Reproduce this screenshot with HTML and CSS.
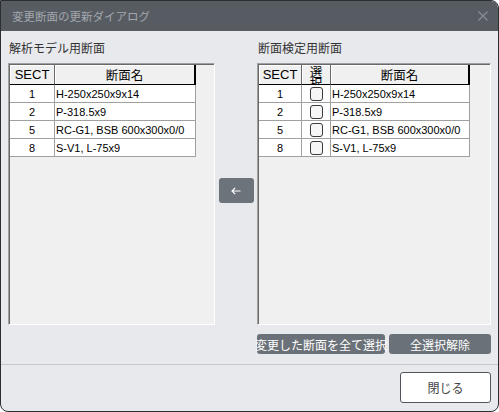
FILE: index.html
```html
<!DOCTYPE html>
<html lang="ja">
<head>
    <meta charset="utf-8">
    <title>変更断面の更新ダイアログ</title>
    <link rel="stylesheet" href="styles.css">
</head>
<body>
    <div class="dialog">
        <div class="titlebar">
            <span class="title">変更断面の更新ダイアログ</span>
            <button class="title-close" aria-label="閉じる">
                <svg width="10" height="10" viewBox="0 0 10 10"><path d="M0.5 0.5L9.5 9.5M9.5 0.5L0.5 9.5" stroke="#8b9096" stroke-width="1.1" fill="none"/></svg>
            </button>
        </div>

        <div class="content">
            <div class="label">解析モデル用断面</div>
            <div></div>
            <div class="label">断面検定用断面</div>

            <!-- 左: 解析モデル側の断面一覧 -->
            <div class="panel">
                <div class="grid grid-left">
                    <div class="row head">
                        <div class="cell sect">SECT</div>
                        <div class="cell name-head">断面名</div>
                    </div>
                    <div class="row">
                        <div class="cell sect">1</div>
                        <div class="cell name">H-250x250x9x14</div>
                    </div>
                    <div class="row">
                        <div class="cell sect">2</div>
                        <div class="cell name">P-318.5x9</div>
                    </div>
                    <div class="row">
                        <div class="cell sect">5</div>
                        <div class="cell name">RC-G1, BSB 600x300x0/0</div>
                    </div>
                    <div class="row">
                        <div class="cell sect">8</div>
                        <div class="cell name">S-V1, L-75x9</div>
                    </div>
                </div>
            </div>

            <div class="middle">
                <button class="arrow-btn" aria-label="反映">
                    <svg width="10" height="8" viewBox="0 0 10 8"><path d="M9.5 4H1M4.2 0.8L1 4L4.2 7.2" stroke="#fff" stroke-width="1.2" fill="none"/></svg>
                </button>
            </div>

            <!-- 右: 検定側の断面一覧（選択チェック付き） -->
            <div class="panel">
                <div class="grid grid-right">
                    <div class="row head">
                        <div class="cell sect">SECT</div>
                        <div class="cell sel-head">選択</div>
                        <div class="cell name-head">断面名</div>
                    </div>
                    <div class="row">
                        <div class="cell sect">1</div>
                        <div class="cell check"><span class="box"></span></div>
                        <div class="cell name">H-250x250x9x14</div>
                    </div>
                    <div class="row">
                        <div class="cell sect">2</div>
                        <div class="cell check"><span class="box"></span></div>
                        <div class="cell name">P-318.5x9</div>
                    </div>
                    <div class="row">
                        <div class="cell sect">5</div>
                        <div class="cell check"><span class="box"></span></div>
                        <div class="cell name">RC-G1, BSB 600x300x0/0</div>
                    </div>
                    <div class="row">
                        <div class="cell sect">8</div>
                        <div class="cell check"><span class="box"></span></div>
                        <div class="cell name">S-V1, L-75x9</div>
                    </div>
                </div>
            </div>

            <div></div>
            <div></div>
            <div class="actions">
                <button class="btn btn-select">変更した断面を全て選択</button>
                <button class="btn btn-clear">全選択解除</button>
            </div>
        </div>

        <div class="footer">
            <button class="close-btn">閉じる</button>
        </div>
    </div>
</body>
</html>
```

FILE: styles.css
```css
* {
    box-sizing: border-box;
}

body {
    margin: 0;
    background: #fff;
    font-family: "Noto Sans CJK JP", "Noto Sans", sans-serif;
}

button {
    font-family: inherit;
    cursor: pointer;
}

.dialog {
    width: 499px;
    height: 412px;
    border: 1px solid #2b2f34;
    border-radius: 0 8px 8px 8px;
    background: #e8e9ed;
    display: flex;
    flex-direction: column;
    overflow: hidden;
}

.titlebar {
    height: 30px;
    flex: none;
    background: #575c63;
    display: flex;
    align-items: center;
    justify-content: space-between;
    padding: 0 10px 0 11px;
}

.title {
    color: #a3a7ad;
    font-size: 11.5px;
}

.title-close {
    border: none;
    background: none;
    padding: 0;
    width: 10px;
    height: 10px;
    display: flex;
}

.content {
    flex: 1;
    display: grid;
    grid-template-columns: 207px 42px 234px;
    grid-template-rows: 16px 262px 20px;
    padding: 9px 7px 0 7px;
}

.label {
    font-size: 12px;
    line-height: 16px;
    color: #333;
    padding-left: 1px;
}

.panel {
    margin-top: 7px;
    height: 262px;
    background: #f0f0f0;
    border: 1px solid;
    border-color: #a0a0a0 #fff #fff #a0a0a0;
    box-shadow: inset 1px 1px #696969;
    padding: 1px 0 0 1px;
}

.middle {
    margin-top: 7px;
    display: flex;
    align-items: center;
    justify-content: center;
}

.arrow-btn {
    width: 35px;
    height: 25px;
    border: none;
    border-radius: 3px;
    background: #6c737b;
    display: flex;
    align-items: center;
    justify-content: center;
    padding: 0;
}

/* 一覧グリッド */
.grid {
    font-family: "Liberation Sans", Arial, sans-serif;
    font-size: 11px;
    color: #000;
}

.row {
    display: grid;
    height: 18px;
}

.grid-left .row {
    grid-template-columns: 45px 141px;
}

.grid-right .row {
    grid-template-columns: 43px 29px 139px;
}

.cell {
    background: #fff;
    border-right: 1px solid #a0a0a0;
    border-bottom: 1px solid #a0a0a0;
    display: flex;
    align-items: center;
    white-space: nowrap;
    overflow: hidden;
}

.cell.sect {
    justify-content: center;
}

.cell.name {
    padding-left: 1px;
}

.cell.check {
    justify-content: center;
}

.box {
    width: 13px;
    height: 14px;
    border: 1px solid #3a3a3a;
    border-radius: 3px;
    background: #f6f6f6;
}

.row.head {
    height: 20px;
}

.head .cell {
    background: #f0f0f0;
    border-right: 1px solid #6a6a6a;
    border-bottom: 1px solid #000;
    box-shadow: inset 1px 1px #fff;
    font-size: 13px;
    justify-content: center;
}

.head .cell:last-child {
    border-right: 2px solid #000;
}

.head .name-head,
.head .sel-head {
    font-family: "Noto Sans CJK JP", sans-serif;
    font-size: 12.5px;
}

/* 列幅が狭いので見出しは折り返して下側が隠れる */
.head .sel-head {
    white-space: normal;
    display: block;
    text-align: center;
    line-height: 11px;
    padding: 1px 6px 0;
    word-break: break-all;
}

.actions {
    grid-column: 3;
    margin-top: 16px;
    display: flex;
    gap: 4px;
}

.btn {
    height: 20px;
    border: none;
    border-radius: 3px;
    background: #6b7178;
    color: #fff;
    font-size: 12px;
    padding: 0;
    white-space: nowrap;
    overflow: visible;
    display: flex;
    align-items: center;
    justify-content: center;
}

.btn-select {
    width: 128px;
}

.btn-clear {
    width: 102px;
}

.footer {
    flex: none;
    height: 47px;
    border-top: 1px solid #c2c8cf;
    display: flex;
    justify-content: flex-end;
    align-items: flex-start;
    padding: 7px 7px 0 0;
}

.close-btn {
    width: 91px;
    height: 31px;
    background: #fff;
    border: 1px solid #50555b;
    border-radius: 3px;
    font-size: 12px;
    color: #444;
}
```
